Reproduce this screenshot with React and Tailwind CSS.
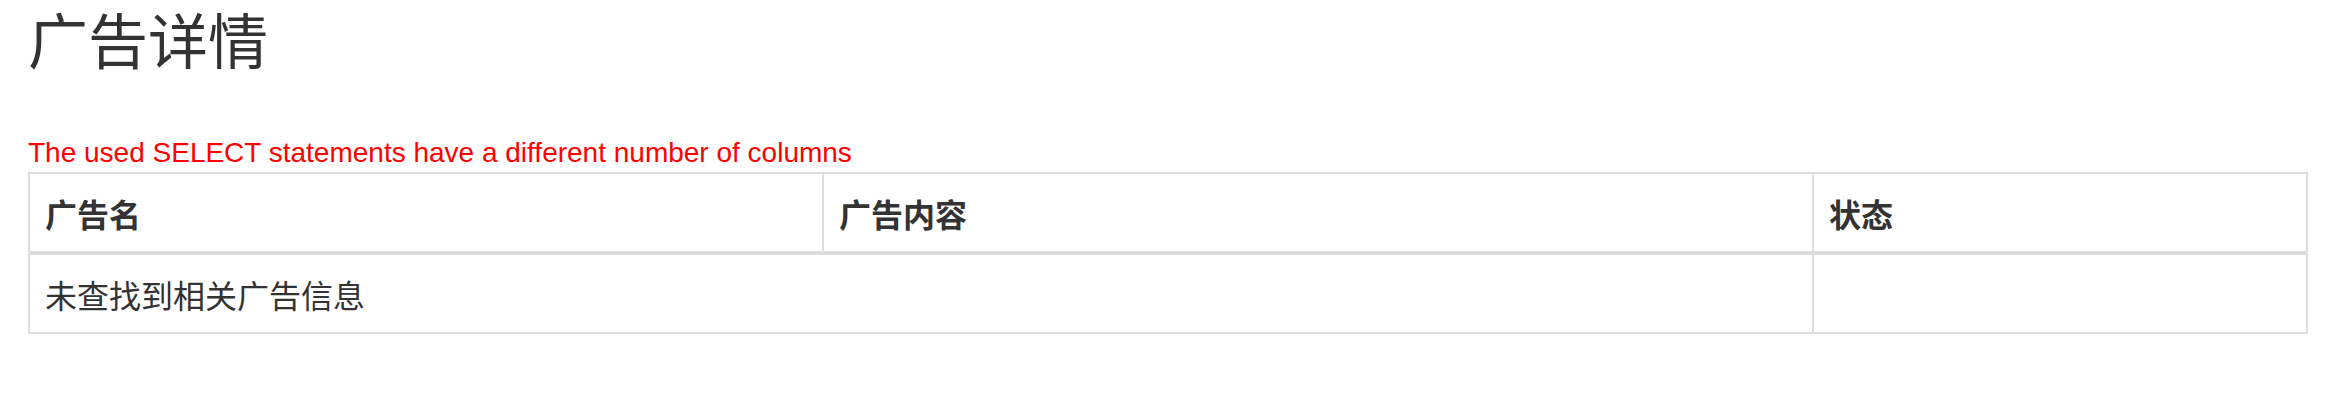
const COLUMNS = [
  { key: 'name', label: '广告名', width: 'w-[794px]' },
  { key: 'content', label: '广告内容', width: 'w-[990px]' },
  { key: 'status', label: '状态', width: '' },
]

const ads = []

export default function App() {
  return (
    <div className="min-h-screen bg-white pl-[28px] pr-[18px] pt-[5px] text-[#333]">
      <h1 className="m-0 text-[60px] font-normal leading-[66px] font-['Noto_Sans_CJK_SC',sans-serif]">
        广告详情
      </h1>

      <p className="mt-[66px] mb-[3px] text-[28px] leading-[32px] text-[#ff0000] font-['Liberation_Sans',Arial,sans-serif]">
        The used SELECT statements have a different number of columns
      </p>

      <table className="w-full table-fixed border-collapse border-2 border-[#ddd] text-[32px] font-['Noto_Sans_CJK_SC',sans-serif]">
        <thead>
          <tr className="h-[80px]">
            {COLUMNS.map(col => (
              <th
                key={col.key}
                className={`${col.width} border-2 border-b-4 border-[#ddd] px-[15px] text-left align-middle font-bold`}
              >
                {col.label}
              </th>
            ))}
          </tr>
        </thead>
        <tbody>
          {ads.length === 0 ? (
            <tr className="h-[80px]">
              <td colSpan={2} className="border-2 border-[#ddd] px-[15px] align-middle">
                未查找到相关广告信息
              </td>
              <td className="border-2 border-[#ddd] px-[15px]" />
            </tr>
          ) : (
            ads.map(ad => (
              <tr key={ad.id} className="h-[80px]">
                <td className="border-2 border-[#ddd] px-[15px]">{ad.name}</td>
                <td className="border-2 border-[#ddd] px-[15px]">{ad.content}</td>
                <td className="border-2 border-[#ddd] px-[15px]">{ad.status}</td>
              </tr>
            ))
          )}
        </tbody>
      </table>
    </div>
  )
}
